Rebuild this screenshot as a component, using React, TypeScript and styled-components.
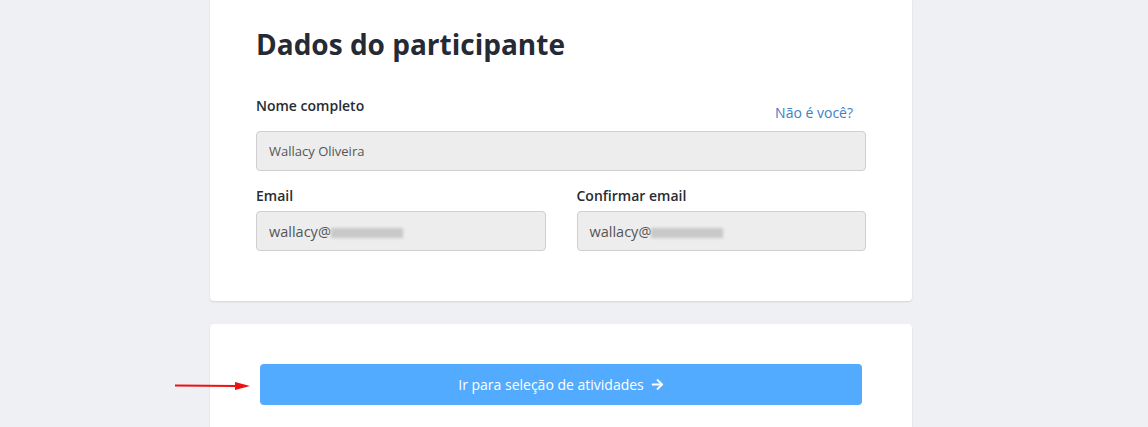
import React from 'react';
import styled, { createGlobalStyle } from 'styled-components';
import { FaArrowRight } from 'react-icons/fa';

const GlobalStyle = createGlobalStyle`
  html, body {
    margin: 0;
    padding: 0;
    background-color: #eef0f4;
    font-family: 'Open Sans', 'Liberation Sans', sans-serif;
    overflow: hidden;
  }
`;

const Page = styled.div`
  width: 702px;
  margin-left: calc(50% - 364px);
  display: flex;
  flex-direction: column;
  gap: 23px;
  height: 427px;
`;

const Card = styled.div<{ $padding: string }>`
  background-color: #ffffff;
  border-radius: 0 0 4px 4px;
  box-shadow: 0 1px 2px rgba(0, 0, 0, 0.12);
  padding: ${(p) => p.$padding};
  position: relative;
  &:last-child {
    border-radius: 4px;
    flex: 1;
  }
`;

const Title = styled.h1`
  margin: 0 0 32px;
  font-size: 28px;
  font-weight: 700;
  color: #252a34;
  line-height: 40px;
`;

const Rows = styled.div`
  display: flex;
  flex-direction: column;
  gap: 15px;
`;

const Row = styled.div`
  display: flex;
  gap: 31px;
`;

const Field = styled.div`
  flex: 1;
  display: flex;
  flex-direction: column;
`;

const LabelRow = styled.div`
  display: flex;
  justify-content: space-between;
  align-items: flex-start;
  margin-bottom: 5px;
`;

const Label = styled.label`
  font-size: 14px;
  font-weight: 550;
  line-height: 20px;
  color: #272b33;
`;

const Link = styled.a`
  font-size: 14px;
  line-height: 20px;
  color: #3b82c4;
  text-decoration: none;
  margin-right: 13px;
  padding: 7px 0 3px;
`;

const Input = styled.div<{ $size: number }>`
  box-sizing: border-box;
  height: 40px;
  border: 1px solid #cfcfcf;
  border-radius: 4px;
  background-color: #ededed;
  padding: 0 12px;
  display: flex;
  align-items: center;
  font-size: ${(p) => p.$size}px;
  color: #555;
`;

const Blur = styled.span<{ $w: number }>`
  display: inline-block;
  width: ${(p) => p.$w}px;
  height: 10px;
  background-color: #c8c8c8;
  filter: blur(1.5px);
  margin-top: 4px;
`;

const Button = styled.button`
  width: 100%;
  height: 41px;
  border: none;
  border-radius: 4px;
  background-color: #52abfe;
  color: #ffffff;
  font-family: 'Open Sans', 'Liberation Sans', sans-serif;
  font-size: 14px;
  display: flex;
  align-items: center;
  justify-content: center;
  gap: 7px;
  cursor: pointer;
`;

const Annotation = styled.svg`
  position: absolute;
  left: -35px;
  top: 56px;
`;

const App: React.FC = () => {
  return (
    <>
      <GlobalStyle />
      <Page>
        <Card $padding="24px 46px 50px">
          <Title>Dados do participante</Title>
          <Rows>
            <Row>
              <Field>
                <LabelRow>
                  <Label>Nome completo</Label>
                  <Link href="#">Não é você?</Link>
                </LabelRow>
                <Input $size={13}>Wallacy Oliveira</Input>
              </Field>
            </Row>
            <Row>
              <Field>
                <LabelRow>
                  <Label>Email</Label>
                </LabelRow>
                <Input $size={14.5}>
                  wallacy@<Blur $w={72} />
                </Input>
              </Field>
              <Field>
                <LabelRow>
                  <Label>Confirmar email</Label>
                </LabelRow>
                <Input $size={14.5}>
                  wallacy@<Blur $w={72} />
                </Input>
              </Field>
            </Row>
          </Rows>
        </Card>
        <Card $padding="40px 50px">
          <Annotation width="76" height="12" viewBox="0 0 76 12">
            <line x1="0" y1="5.5" x2="62" y2="6" stroke="#ee1111" strokeWidth="2" />
            <polygon points="60,2 75,6 60,10" fill="#ee1111" />
          </Annotation>
          <Button>
            Ir para seleção de atividades <FaArrowRight size={13} />
          </Button>
        </Card>
      </Page>
    </>
  );
};

export default App;
